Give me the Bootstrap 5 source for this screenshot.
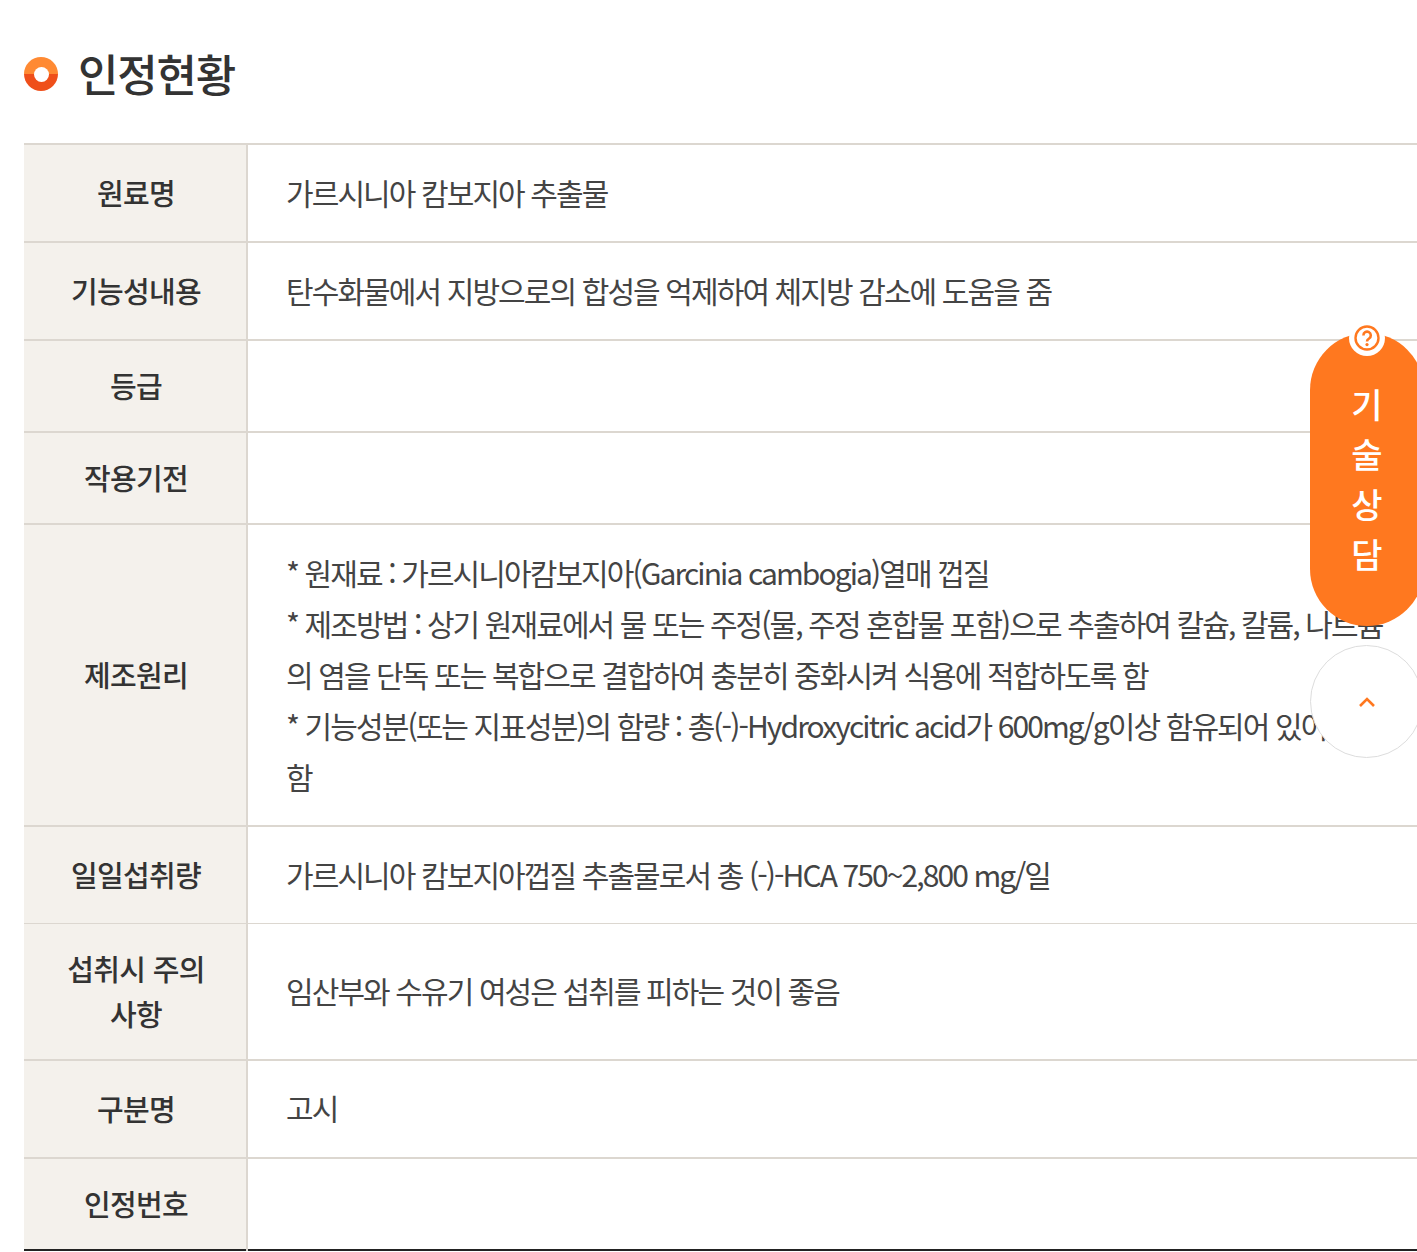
<!DOCTYPE html>
<html lang="ko">
<head>
<meta charset="utf-8">
<title>인정현황</title>
<link rel="stylesheet" href="https://cdn.jsdelivr.net/npm/bootstrap@5.3.0/dist/css/bootstrap.min.css">
<style>
html,body{overflow:hidden;height:1252px;background:#fff}
body{font-family:"Noto Sans CJK KR","Noto Sans",sans-serif;color:#444;position:relative}
.page-wrap{padding:40px 0 0 24px;width:1440px}
.sec-title{font-size:44px;font-weight:500;line-height:66px;color:#333;letter-spacing:-1.2px;margin:0 0 37px;gap:20px}
.sec-dot{width:34px;height:34px;border-radius:50%;background:linear-gradient(#ff8a33 50%,#ef4f1a 50%);display:flex;align-items:center;justify-content:center;flex:none;margin-top:2px}
.sec-dot::after{content:"";width:15px;height:15px;border-radius:50%;background:#fff;filter:blur(.4px)}
.info-table{table-layout:fixed;width:100%;margin:0;border-top:2px solid #dcd7d0;border-bottom:2px solid #222}
.info-table th,.info-table td{border:0;border-bottom:2px solid #dcd7d0;vertical-align:middle;padding:21.5px 0 23.5px;background:#fff;box-shadow:none}
.info-table tr:last-child th,.info-table tr:last-child td{border-bottom:0}
.info-table th{width:223px;background:#f4f1ec;border-right:2px solid #dcd7d0;font-size:29px;font-weight:500;line-height:44.5px;height:92px;text-align:center;color:#333;letter-spacing:-.7px;padding:22px 37px 23px 39px}
.info-table td{font-size:30px;font-weight:400;line-height:51px;color:#444;letter-spacing:-1.9px;padding-left:38px;padding-right:42px}
.info-table tr.thin-rule th,.info-table tr.thin-rule td{border-bottom-width:1px}
.info-table tr.tall-row th{height:136px}
.consult-pill{position:absolute;left:1310px;top:333px;width:114px;height:293px;border-radius:57px;background:#ff781f;color:#fff;font-size:34px;font-weight:500;line-height:50px;text-align:center;padding-top:46px}
.consult-pill span{display:block}
.help-mark{position:absolute;left:1349px;top:320px;width:36px;height:36px;border-radius:50%;background:#fff;display:flex;align-items:center;justify-content:center}
.top-btn{position:absolute;left:1310px;top:645px;width:113px;height:113px;border-radius:50%;background:#fff;border:1px solid #ddd;display:flex;align-items:center;justify-content:center}
</style>
</head>
<body>
<div class="page-wrap">
  <h2 class="sec-title d-flex align-items-center"><i class="sec-dot"></i><span>인정현황</span></h2>
  <table class="table info-table">
    <tbody>
      <tr><th scope="row">원료명</th><td>가르시니아 캄보지아 추출물</td></tr>
      <tr><th scope="row">기능성내용</th><td>탄수화물에서 지방으로의 합성을 억제하여 체지방 감소에 도움을 줌</td></tr>
      <tr><th scope="row">등급</th><td></td></tr>
      <tr><th scope="row">작용기전</th><td></td></tr>
      <tr><th scope="row">제조원리</th><td>* 원재료 : 가르시니아캄보지아(Garcinia cambogia)열매 껍질<br>* 제조방법 : 상기 원재료에서 물 또는 주정(물, 주정 혼합물 포함)으로 추출하여 칼슘, 칼륨, 나트륨의 염을 단독 또는 복합으로 결합하여 충분히 중화시켜 식용에 적합하도록 함<br>* 기능성분(또는 지표성분)의 함량 : 총(-)-Hydroxycitric acid가 600mg/g이상 함유되어 있어야<br>함</td></tr>
      <tr class="thin-rule"><th scope="row">일일섭취량</th><td>가르시니아 캄보지아껍질 추출물로서 총 (-)-HCA 750~2,800 mg/일</td></tr>
      <tr class="tall-row"><th scope="row">섭취시 주의사항</th><td>임산부와 수유기 여성은 섭취를 피하는 것이 좋음</td></tr>
      <tr><th scope="row">구분명</th><td>고시</td></tr>
      <tr><th scope="row">인정번호</th><td></td></tr>
    </tbody>
  </table>
</div>
<div class="consult-pill"><span>기</span><span>술</span><span>상</span><span>담</span></div>
<div class="help-mark">
  <svg width="26" height="26" viewBox="0 0 26 26" fill="none" stroke="#ff781f"><circle cx="13" cy="13" r="11.5" stroke-width="2.4"/><path d="M9.4 10.4a3.7 3.7 0 1 1 5.7 3.1c-1.4.9-2.1 1.4-2.1 2.9" stroke-width="2.6"/><circle cx="13" cy="19.6" r="1.6" fill="#ff781f" stroke="none"/></svg>
</div>
<div class="top-btn">
  <svg width="18" height="12" viewBox="0 0 18 12" fill="none" stroke="#ff781f" stroke-width="2.6"><path d="M2 10l7-7 7 7"/></svg>
</div>
<script src="https://cdn.jsdelivr.net/npm/bootstrap@5.3.0/dist/js/bootstrap.bundle.min.js"></script>
</body>
</html>
